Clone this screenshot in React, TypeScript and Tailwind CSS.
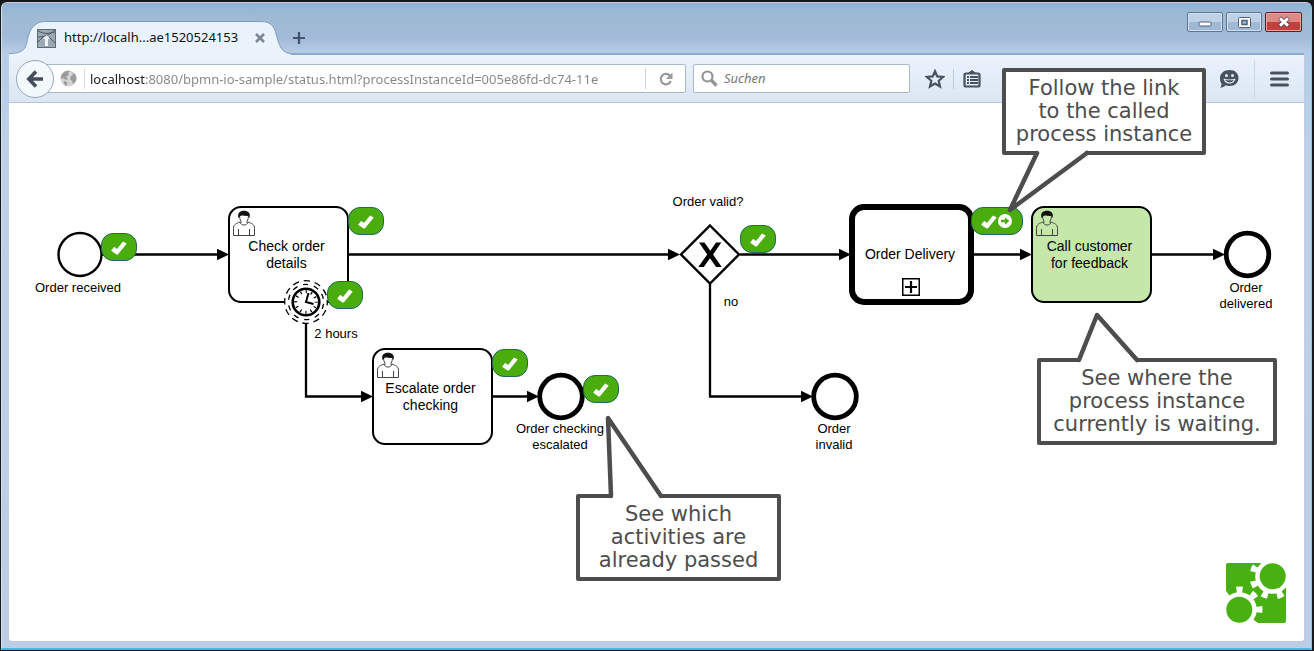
import type { ReactNode } from 'react'
import { clsx } from 'clsx'

const badges = [
  { label: 'Order received passed', pos: 'left-[92px] top-[130px]' },
  { label: 'Check order details passed', pos: 'left-[339px] top-[104px]' },
  { label: 'Timer passed', pos: 'left-[318px] top-[178px]' },
  { label: 'Escalate order checking passed', pos: 'left-[483px] top-[246px]' },
  { label: 'Order checking escalated passed', pos: 'left-[574px] top-[272px]' },
  { label: 'Order valid passed', pos: 'left-[731px] top-[122px]' },
]

const labels = [
  { text: 'Order received', pos: 'left-[19px] top-[177px] w-[100px]' },
  { text: '2 hours', pos: 'left-[302px] top-[223px] w-[50px]' },
  { text: 'Order checking escalated', pos: 'left-[501px] top-[318px] w-[100px]' },
  { text: 'Order valid?', pos: 'left-[649px] top-[91px] w-[100px]' },
  { text: 'no', pos: 'left-[702px] top-[191px] w-[40px]' },
  { text: 'Order invalid', pos: 'left-[800px] top-[318px] w-[50px]' },
  { text: 'Order delivered', pos: 'left-[1207px] top-[177px] w-[60px]' },
]

const flows = [
  { line: 'M93 151.5H212', tip: [220, 151.5] },
  { line: 'M339 151.5H662', tip: [671, 151.5] },
  { line: 'M731 151.5H832', tip: [842, 151.5] },
  { line: 'M963 151.5H1014', tip: [1023, 151.5] },
  { line: 'M1142 151.5H1206', tip: [1216, 151.5] },
  { line: 'M297 220V293.5H355', tip: [364, 293.5] },
  { line: 'M483 293.5H520', tip: [530, 293.5] },
  { line: 'M701 181V293.5H794', tip: [804, 293.5] },
]

function Check() {
  return (
    <svg width="16" height="14" viewBox="0 0 16 14" className="translate-y-px">
      <path
        d="M.4 9.2 2.9 6.2q.5-.4 1 0L6 8 11.6.9q.4-.5.9-.2l2.8 1.6q.5.3.1.8L7 13.2q-.9.8-1.8 0L.5 9.900q-.3-.4-.1-.7Z"
        fill="#fff"
      />
    </svg>
  )
}

function Badge({ pos, label, children }: { pos: string; label: string; children?: ReactNode }) {
  return (
    <span
      role="img"
      aria-label={label}
      className={clsx(
        'absolute flex h-7 items-center justify-center rounded-xl border border-[#1d6a5c] bg-[#4aac0d] px-[9px]',
        pos,
      )}
    >
      <Check />
      {children}
    </span>
  )
}

function UserIcon() {
  return (
    <svg width="24" height="27" viewBox="0 0 24 27" fill="none" className="absolute left-[2px] top-[2px]">
      <g stroke="#444" strokeWidth="1">
        <path d="M8 12C4.500 13.500 1.500 14 1.500 18.500v7h21v-7c0-4.500-3-5-6.500-6.500" />
        <path d="M8 12c.5 4 7.500 4 8 0M6.500 19v6.500M17.500 19v6.500" />
        <path d="M7.500 6c0 3.500 1.800 4.500 1.500 7M16.500 6c0 3.500-1.800 4.500-1.500 7" />
      </g>
      <path d="M6.500 8C5 3 8 .7 12 .7S19 3 17.500 8c-.6-1.200-1-2-1.500-2.300-2.300.8-4.600-.7-7.100.1-.9.400-1.600 1.200-2.400 2.200Z" fill="#111" />
    </svg>
  )
}

function Task({ pos, active, children }: { pos: string; active?: boolean; children: ReactNode }) {
  return (
    <div
      className={clsx(
        'absolute flex h-[97px] w-[121px] items-center justify-center rounded-[13px] border-2 border-black pl-2 pr-3 text-center text-[14px] leading-[17px]',
        active ? 'bg-[#c5e8aa]' : 'bg-white',
        pos,
      )}
    >
      <UserIcon />
      {children}
    </div>
  )
}

type CalloutProps = { pos: string; tail: string; opening: string; children: ReactNode }

function Callout({ pos, tail, opening, children }: CalloutProps) {
  return (
    <div
      className={clsx(
        'absolute rounded-[2px] border-4 border-[#4d4d4d] bg-white py-[5px] text-center font-["DejaVu_Sans",sans-serif] text-[21px] leading-[23px] text-[#4d4d4d]',
        pos,
      )}
    >
      <svg width="10" height="10" className="absolute -left-1 -top-1 overflow-visible">
        <path d={opening} fill="#fff" />
        <path d={tail} fill="#fff" stroke="#4d4d4d" strokeWidth="4.500" strokeLinejoin="round" strokeLinecap="round" />
      </svg>
      <p className="relative whitespace-pre-line">{children}</p>
    </div>
  )
}

function Timer() {
  return (
    <svg width="46" height="46" viewBox="-23 -23 46 46" fill="none" stroke="#000" className="absolute left-[274px] top-[176px]">
      <circle r="22" fill="#fff" stroke="none" />
      <circle r="21.300" strokeWidth="1.300" strokeDasharray="6.500 4.650" strokeDashoffset="3" />
      <circle r="17.600" strokeWidth="1.300" strokeDasharray="5.200 5.850" strokeDashoffset="-2" />
      <circle r="13.300" strokeWidth="2.600" />
      <circle r="10.200" strokeWidth="3" strokeDasharray="1.200 4.140" strokeDashoffset=".6" />
      <path d="M2.500-9 0 0l7.500 2" strokeWidth="2" />
    </svg>
  )
}

function Logo() {
  return (
    <svg width="60" height="60" viewBox="0 0 60 60" className="absolute bottom-[18px] right-[18px]">
      <rect width="60" height="60" rx="2" fill="#48b010" />
      <path d="M47 0h13v13H47ZM0 47h13v13H0Z" fill="#fff" />
      <g fill="#fff" stroke="#fff" strokeWidth="7">
        <g transform="translate(46.500 13.500) rotate(22.500)">
          <circle r="17.300" stroke="none" />
          <circle r="19.500" pathLength="80" strokeDasharray="4 6" strokeDashoffset="2" fill="none" />
        </g>
        <g transform="translate(13.500 46.500)">
          <circle r="17.300" stroke="none" />
          <circle r="19.500" pathLength="80" strokeDasharray="4 6" strokeDashoffset="2" fill="none" />
        </g>
      </g>
      <circle cx="46.700" cy="13.300" r="13" fill="#48b010" />
      <circle cx="13.300" cy="46.700" r="13" fill="#48b010" />
    </svg>
  )
}

function Diagram() {
  return (
    <main className='relative flex-1 rounded-b-[3px] bg-white font-["Liberation_Sans",Arial,sans-serif] text-black'>
      <svg className="absolute inset-0 h-full w-full" fill="none" stroke="#000">
        {flows.map((flow) => (
          <g key={flow.line}>
            <path d={flow.line} strokeWidth="2.300" />
            <path d={`M${flow.tip[0]} ${flow.tip[1]}l-12-5.800v11.600Z`} fill="#000" stroke="none" />
          </g>
        ))}
        <circle cx="71" cy="151.500" r="21.500" strokeWidth="2.400" fill="#fff" />
        <circle cx="552" cy="293.500" r="21.300" strokeWidth="4.800" fill="#fff" />
        <circle cx="826" cy="293.500" r="21.300" strokeWidth="4.800" fill="#fff" />
        <circle cx="1238.500" cy="151.500" r="21.300" strokeWidth="4.800" fill="#fff" />
        <path d="M701 122.500 730 151.500 701 180.500 672 151.500Z" strokeWidth="2.400" fill="#fff" />
        <path d="M690 139.500h5.500l5.800 8.300 5.700-8.300h5.300l-8.200 12 8.600 12.500h-5.600l-6.100-8.700-6.200 8.700h-5.500l8.900-12.600Z" fill="#000" stroke="none" />
      </svg>

      <Task pos="left-[219px] top-[103px]">Check order details</Task>
      <Task pos="left-[363px] top-[245px]">Escalate order checking</Task>
      <Task pos="left-[1022px] top-[103px]" active>
        Call customer for feedback
      </Task>
      <div className="absolute left-[840px] top-[101px] flex h-[101px] w-[125px] items-center justify-center rounded-[15px] border-[6px] border-black bg-white pr-[3px] text-[14px] leading-[17px]">
        Order Delivery
        <svg width="18" height="18" viewBox="0 0 18 18" fill="none" stroke="#000" className="absolute bottom-[3px] left-[47px]">
          <rect x=".75" y=".75" width="16.500" height="16.500" strokeWidth="1.500" />
          <path d="M9 3v12M3 9h12" strokeWidth="2.200" />
        </svg>
      </div>
      <Timer />

      {labels.map((label) => (
        <span key={label.text} className={clsx('absolute text-center text-[13px] leading-4', label.pos)}>
          {label.text}
        </span>
      ))}

      {badges.map((badge) => (
        <Badge key={badge.label} {...badge} />
      ))}
      <Badge pos="left-[962px] top-[104px]" label="Order Delivery passed, open called instance">
        <svg width="16" height="16" viewBox="0 0 16 16">
          <circle cx="8" cy="8" r="7" fill="#fff" />
          <path d="M4 6.700h4V4.200L12.300 8 8 11.800V9.300H4Z" fill="#4aac0d" />
        </svg>
      </Badge>

      <Callout
        pos="-top-[35px] left-[993px] w-[204px]"
        tail="M35 85 8 142 85 85"
        opening="M35 81H83V88H35Z"
      >
        {'Follow the link\nto the called\nprocess instance'}
      </Callout>
      <Callout
        pos="left-[1028px] top-[255px] w-[240px]"
        tail="M42 2 60-43 100 2"
        opening="M42-1H99V5H42Z"
      >
        {'See where the\nprocess instance\ncurrently is waiting.'}
      </Callout>
      <Callout
        pos="left-[567px] top-[391px] w-[205px]"
        tail="M35 2 32-76 85 2"
        opening="M35-1H84V5H35Z"
      >
        {'See which\nactivities are\nalready passed'}
      </Callout>

      <Logo />
    </main>
  )
}

function TitleBar() {
  return (
    <header className="flex h-[50px] items-end">
      <div className="relative flex h-8 w-[282px] items-center pl-7 pr-[26px] pt-[2px]">
        <svg width="282" height="34" viewBox="0 0 282 34" className="absolute left-0 top-0">
          <path d="M0 32.500C18 32.500 17 24 19 16S26 .5 36 .5H252C264 .5 266 8 268 16s5 16.500 14 16.500V34H0Z" fill="#eaf3fc" />
          <path d="M0 32.500C18 32.500 17 24 19 16S26 .5 36 .5H252C264 .5 266 8 268 16s5 16.500 14 16.500" fill="none" stroke="#7f9cba" />
        </svg>
        <svg width="19" height="19" viewBox="0 0 19 19" className="relative" fill="none">
          <rect x=".5" y=".5" width="18" height="18" fill="#9aa9b3" stroke="#5d6b75" />
          <path d="M1 2c6 3 10 3 17 1M1 8c7 0 12-3 17-7M1 13l6-6M12 8l6 6" stroke="#4c5962" />
          <path d="M9.500 6 13 10h-2v7H8v-7H6Z" fill="#eef3f6" />
        </svg>
        <span className="relative ml-2 flex-1 whitespace-nowrap text-[13px] text-[#111]">http://localh...ae1520524153</span>
        <button type="button" aria-label="Close tab" className="relative">
          <svg width="10" height="10" viewBox="0 0 10 10" stroke="#7d8894" strokeWidth="2.600">
            <path d="M1 1l8 8M9 1 1 9" />
          </svg>
        </button>
      </div>
      <button type="button" aria-label="New tab" className="mb-2 ml-px">
        <svg width="14" height="14" viewBox="0 0 14 14" stroke="#41546a" strokeWidth="2.200">
          <path d="M7 1v12M1 7h12" />
        </svg>
      </button>

      <div className="ml-auto mr-[2px] mt-[9px] flex gap-[3px] self-start">
        <button type="button" aria-label="Minimize" className="flex h-5 w-9 items-center justify-center rounded-[2px] border border-[#5f7693] bg-linear-to-b from-[#bfd1e6] from-50% to-[#9fb8d4] to-50% shadow-[inset_0_0_0_1px_#d3e0ef]">
          <svg width="14" height="12" viewBox="0 0 14 12">
            <rect x="1" y="6" width="12" height="4" rx="1" fill="#fff" stroke="#50617a" />
          </svg>
        </button>
        <button type="button" aria-label="Maximize" className="flex h-5 w-9 items-center justify-center rounded-[2px] border border-[#5f7693] bg-linear-to-b from-[#bfd1e6] from-50% to-[#9fb8d4] to-50% shadow-[inset_0_0_0_1px_#d3e0ef]">
          <svg width="13" height="11" viewBox="0 0 13 11" stroke="#50617a">
            <rect x=".5" y=".5" width="12" height="10" rx="1" fill="#fff" />
            <rect x="4" y="3.500" width="5" height="4" fill="#9fb8d4" strokeWidth="1.500" />
          </svg>
        </button>
        <button type="button" aria-label="Close" className="flex h-5 w-[37px] items-center justify-center rounded-[2px] border border-[#5c1f2a] bg-linear-to-b from-[#dc8a85] from-50% to-[#c4403c] to-50% shadow-[inset_0_0_0_1px_#e5a6a2]">
          <svg width="14" height="12" viewBox="0 0 14 12">
            <path d="M2.500 2l9 8M11.500 2l-9 8" stroke="#6b4a55" strokeWidth="4.500" />
            <path d="M3 2.400l8 7.200M11 2.400 3 9.600" stroke="#fff" strokeWidth="2.800" />
          </svg>
        </button>
      </div>
    </header>
  )
}

function Toolbar() {
  return (
    <nav className="flex h-[50px] items-center border-b border-t-2 border-b-[#b4c6da] border-t-[#8ea9c8] bg-linear-to-b from-[#ebf3fc] to-[#dae6f3] pl-[7px]">
      <button type="button" aria-label="Back" className="z-10 flex size-[38px] shrink-0 items-center justify-center rounded-full border border-[#98a8ba] bg-[#f3f8fd]">
        <svg width="18" height="18" viewBox="0 0 18 18" fill="none" stroke="#454f5c" strokeWidth="3.600">
          <path d="M10 1.500 2.800 9l7.200 7.500M3 9h14" />
        </svg>
      </button>
      <div className="-ml-2 flex h-[29px] flex-1 items-center rounded-r-[2px] border border-[#aab9ca] bg-white pl-[13px]">
        <svg width="17" height="17" viewBox="0 0 17 17" className="shrink-0">
          <circle cx="8.500" cy="8.500" r="8" fill="#d4d4d4" />
          <path d="M2 4c2-3 6-4 8-3L8 3l1 2-3 2 2 2-2 1-3-2-2 1c-.4-2 0-3.500 1-5ZM12 3l3 1c1.500 2 2 4 1 7l-3 3-1-3-2-2 1-3 2-1ZM4 11l3 1v3l-1 1c-1.500-1-2.500-3-2-5Z" fill="#9b9b9b" />
        </svg>
        <input
          type="text"
          aria-label="Address"
          defaultValue="localhost:8080/bpmn-io-sample/status.html?processInstanceId=005e86fd-dc74-11e"
          className="ml-[7px] h-5 min-w-0 flex-1 border-l border-[#d9d9d9] bg-linear-to-r from-[#1a1a1a] from-[60px] to-[#858585] to-[60px] bg-clip-text pl-[5px] text-[13px] text-transparent outline-none"
        />
        <button type="button" aria-label="Reload" className="ml-7 flex h-5 w-10 items-center justify-center border-l border-[#c9d2dc]">
          <svg width="14" height="14" viewBox="0 0 14 14" fill="none">
            <path d="M11 3.800A5.200 5.200 0 1 0 11.800 9" stroke="#999" strokeWidth="2.200" />
            <path d="M13.500.5v6.500H7Z" fill="#999" />
          </svg>
        </button>
      </div>
      <label className="ml-[7px] flex h-[29px] w-[217px] items-center rounded-[2px] border border-[#aab9ca] bg-white pl-[7px]">
        <svg width="17" height="17" viewBox="0 0 17 17" fill="none" stroke="#929292">
          <circle cx="6.500" cy="6.500" r="5" strokeWidth="2.200" />
          <path d="m10.500 10.500 5 5" strokeWidth="3.200" />
        </svg>
        <input
          type="search"
          aria-label="Search"
          placeholder="Suchen"
          className="ml-[6px] min-w-0 flex-1 text-[13px] italic outline-none placeholder:text-[#777]"
        />
      </label>
      <div className="flex w-[394px] items-center text-[#48525f]">
        <button type="button" aria-label="Bookmark" className="ml-[15px]">
          <svg width="20" height="20" viewBox="0 0 20 20" fill="none" stroke="currentColor" strokeWidth="2.200">
            <path d="m10 2.200 2.300 5.200 5.700.6-4.300 3.800 1.300 5.600-5-2.900-5 2.900 1.300-5.600L2 8l5.700-.6Z" />
          </svg>
        </button>
        <span className="ml-2 h-5 w-px bg-[#bccbdc]" />
        <button type="button" aria-label="Bookmarks list" className="ml-[9px]">
          <svg width="18" height="18" viewBox="0 0 18 18" fill="none" stroke="currentColor">
            <rect x="1.500" y="3.500" width="15" height="13" rx="1.500" strokeWidth="2.200" />
            <path d="M5 3.500 9 .5l4 3Z" fill="currentColor" />
            <path d="M4 7h2M7 7h8M4 10h2M7 10h8M4 13h2M7 13h8" strokeWidth="1.800" />
          </svg>
        </button>
        <button type="button" aria-label="Chat" className="ml-auto">
          <svg width="20" height="18" viewBox="0 0 20 18">
            <path d="M10.500 0C16 0 19.500 3.500 19.500 8s-3.500 8-9 8c-1.500 0-2.700-.2-3.800-.7C5.300 16.800 3.500 17.700 1 17.800c1-1.100 1.500-2.300 1.600-4C1.500 12.400 1 10.500 1 8c0-4.500 4-8 9.500-8Z" fill="currentColor" />
            <circle cx="7.500" cy="5.500" r="1.500" fill="#e5eef8" />
            <circle cx="13.500" cy="5.500" r="1.500" fill="#e5eef8" />
            <path d="M4.500 8.500q6 1.800 12 0c-.5 3-3 5-6 5s-5.500-2-6-5Z" fill="#e5eef8" />
            <path d="M6 9.800q4.500 1 9 0-1.500 2.600-4.500 2.600T6 9.800Z" fill="currentColor" />
          </svg>
        </button>
        <span className="ml-[15px] h-[38px] w-px bg-[#cbd8e6]" />
        <button type="button" aria-label="Menu" className="ml-[15px] mr-[15px]">
          <svg width="19" height="16" viewBox="0 0 19 16" stroke="currentColor" strokeWidth="3.200" strokeLinecap="round">
            <path d="M1.600 2h15.800M1.600 8h15.800M1.600 14h15.800" />
          </svg>
        </button>
      </div>
    </nav>
  )
}

export default function App() {
  return (
    <div className="flex min-h-screen bg-[#14171c] pb-px pl-px pr-[2px] pt-[2px]">
      <div className='flex flex-1 flex-col rounded-t-[6px] border border-b-2 border-b-[#35c3da] border-l-[#d5e2e6] border-r-[#7ccbe0] border-t-[#d9c6d6] bg-[linear-gradient(#90b3d8_0px,#9dbad3_12px,#a2bad8_34px,#b6cce6_50px,#b9d0e8_110px,#bfd0e6_160px,#bdcde5_100%)] px-[7px] pb-[7px] font-["Noto_Sans","Open_Sans",sans-serif]'>
        <TitleBar />
        <Toolbar />
        <Diagram />
      </div>
    </div>
  )
}
